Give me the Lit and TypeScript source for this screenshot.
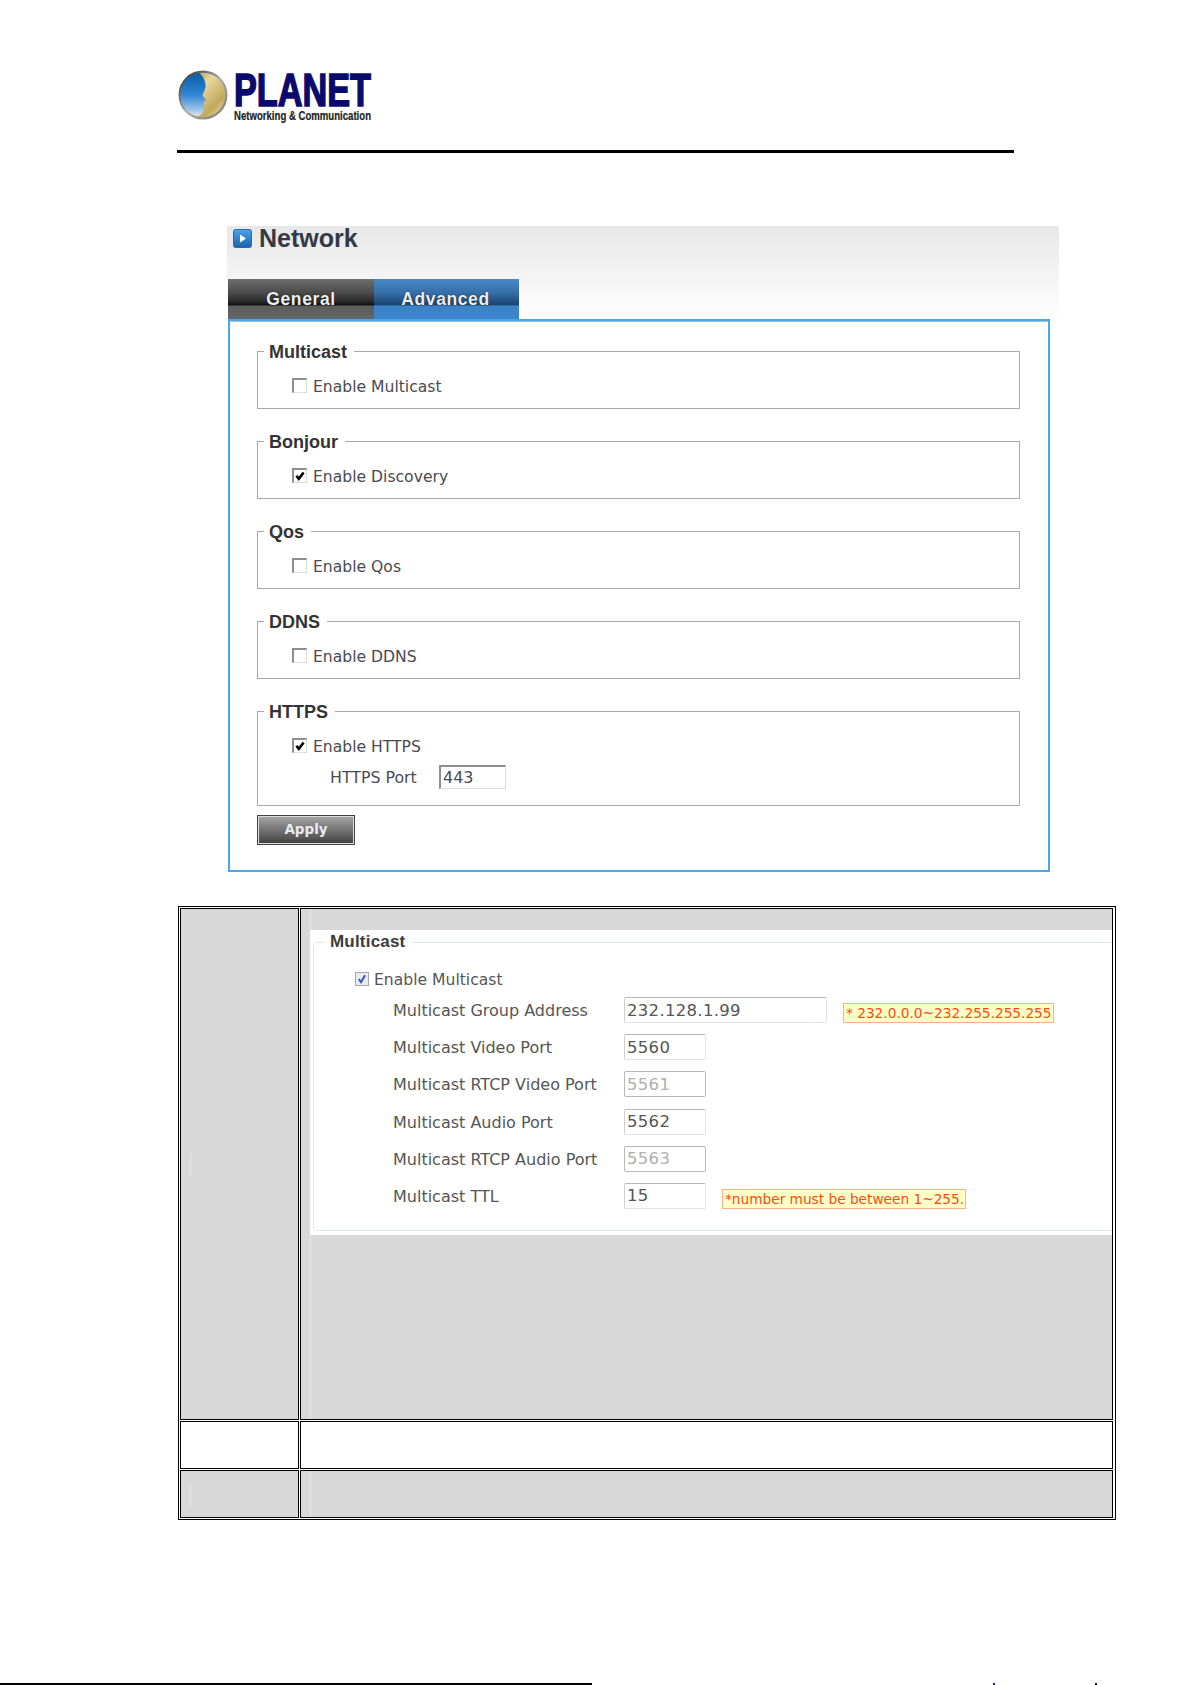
import { LitElement, html, css } from "lit";
import { customElement } from "lit/decorators.js";

const check = html`<svg class="tick" viewBox="0 0 13 13"><path d="M2.6 6.2 L5.2 9.6 L10.4 2.6" fill="none" stroke="#000" stroke-width="2.8"/></svg>`;
const blueCheck = html`<svg class="tick" viewBox="0 0 13 13"><path d="M3 6.5 L5.4 10 L9.8 2.5" fill="none" stroke="#3f55b5" stroke-width="2.2"/></svg>`;

@customElement("app-root")
export class AppRoot extends LitElement {
  static styles = css`
    :host { display: block; width: 1191px; height: 1685px; overflow: hidden; background: #fff; font-family: "DejaVu Sans", sans-serif; color: #444; }
    * { box-sizing: border-box; }
    .page { display: flex; flex-direction: column; height: 1685px; }
    .logo { display: block; margin: 59px 0 0 177px; width: 270px; height: 70px; flex: none; }
    .rule { flex: none; height: 3px; width: 837px; margin: 21px 0 0 177px; background: #000; }
    .head { flex: none; width: 832px; height: 93px; margin: 73px 0 0 227px; background: linear-gradient(#e7e7e7, #fff); display: flex; flex-direction: column; justify-content: space-between; }
    .title { display: flex; align-items: center; gap: 7px; padding: 1px 0 0 6px; height: 24px; }
    .title svg { width: 19px; height: 19px; flex: none; }
    .title span { font: bold 25px/25px "Liberation Sans", sans-serif; color: #333a44; }
    .tabs { display: flex; margin-left: 1px; }
    .tab { width: 146px; height: 40px; display: flex; align-items: center; justify-content: center; padding-top: 1px; color: #eef0f2; font: bold 17.5px "Liberation Sans", sans-serif; letter-spacing: 0.6px; text-shadow: 0 0 1px #000; }
    .tab.gen { background: linear-gradient(#6e6e6e 0%, #4a4a4a 35%, #262626 58%, #111 64%, #5c5c5c 68%, #666 100%); }
    .tab.adv { width: 145px; padding-right: 2px; background: linear-gradient(#4a89c9 0%, #356ea8 35%, #1f4d7d 58%, #1b466f 64%, #3b82c8 68%, #3c84cb 100%); }
    .panel { flex: none; width: 822px; height: 553px; margin-left: 228px; border: 2px solid #45a9ef; box-shadow: inset 0 1px #bbb; padding: 19px 28px 0 27px; display: flex; flex-direction: column; background: #fff; }
    fieldset { margin: 0; padding: 0; border: 1px solid #a9a9a9; min-width: 0; }
    .panel fieldset { height: 69px; margin-bottom: 21px; }
    .panel fieldset.tall { height: 106px; margin-bottom: 0; }
    legend { margin-left: 6px; padding: 2px 7px 0 5px; font: bold 18px/20px "Liberation Sans", sans-serif; color: #333; }
    .row { display: flex; align-items: center; height: 20px; margin: 15px 0 0 35px; font-size: 15.6px; line-height: 20px; color: #4a4a50; }
    .box { width: 15px; height: 15px; margin: -3px 6px 0 -1px; flex: none; border: 1px solid #ddd; border-top: 2px solid #8e8e8e; border-left: 2px solid #8e8e8e; background: #fff; display: flex; align-items: center; justify-content: center; }
    .tick { width: 12px; height: 12px; display: block; }
    .port { display: flex; align-items: center; height: 24px; margin: 8px 0 0 72px; font-size: 15.8px; color: #4a4a50; }
    .port label { width: 109px; }
    .port input { width: 67px; height: 24px; border: 1px solid #ddd; border-top: 2px solid #8e8e8e; border-left: 2px solid #8e8e8e; font: 16px "DejaVu Sans", sans-serif; color: #4a4a50; padding: 0 0 0 2px; outline: none; }
    .apply { flex: none; width: 98px; height: 30px; margin-top: 9px; padding: 0 0 2px; border: 1px solid #444; outline: none; box-shadow: inset 0 0 0 1px #ddd; background: linear-gradient(#a6a6a6, #3f3f3f); color: #e8eaf0; font: bold 13.5px "DejaVu Sans", sans-serif; }
    .table { flex: none; width: 938px; height: 614px; margin: 34px 0 0 178px; border: 1px solid #000; padding: 1px; display: grid; grid-template-columns: 119px 813px; grid-template-rows: 512px 48px 48px; gap: 1px; background: #fff; }
    .cell { border: 1px solid #000; background: #d8d8d8; overflow: hidden; display: flex; }
    .cell.white { background: #fff; }
    .first { align-items: center; padding-left: 9px; }
    .mark { width: 1px; height: 23px; background: #e6e6e6; }
    .second { padding-left: 9px; }
    .lane { flex: 1; min-width: 0; border-left: 1px solid #e6e6e6; display: flex; flex-direction: column; }
    .shot { margin: 21px 0 0 -1px; height: 305px; background: #fff; padding: 2px 0 0 3px; }
    .shot fieldset { width: 830px; height: 299px; border: 1px solid #e0e7ec; border-radius: 5px; }
    .shot legend { margin-left: 11px; padding: 0 7px 0 5px; font-size: 17px; letter-spacing: .2px; color: #3c3c3c; }
    .shot .row { margin: 18px 0 0 41px; color: #555; }
    .shot .box { border: 1px solid #a8a8a8; background: #e8ecf4; width: 14px; height: 14px; margin: -3px 5px 0 0; }
    .form { display: flex; flex-direction: column; gap: 11.2px; margin: 7px 0 0 79px; }
    .f { display: flex; height: 26px; font-size: 16px; color: #555; }
    .f label { width: 231px; line-height: 28px; flex: none; }
    .f input { width: 82px; height: 26px; border: 1px solid #dfe4e8; border-top-color: #b8b8b8; border-left-color: #d0d0d0; border-radius: 2px; font: 16.5px "DejaVu Sans", sans-serif; color: #555; background: #fff; padding: 0 0 0 2px; letter-spacing: .3px; outline: none; }
    .f input.wide { width: 203px; }
    .f input:disabled { border: 1px solid #b8b8b8; color: #b0b0b0; }
    .hint { align-self: flex-end; margin-left: 16px; height: 20px; padding: 0 1px 0 2px; border: 1px solid #ffb080; background: #ffffc8; color: #ff4a14; font-size: 13.7px; line-height: 19px; white-space: nowrap; }
    .foot { flex: none; margin-top: auto; height: 2px; position: relative; }
    .foot .line { width: 592px; height: 2px; background: #000; }
    .foot i { position: absolute; top: 0; width: 2px; height: 2px; }
  `;

  private fs(name: string, label: string, on: boolean) {
    return html`<fieldset><legend>${name}</legend>
      <div class="row"><span class="box">${on ? check : ""}</span>${label}</div></fieldset>`;
  }

  render() {
    return html`<div class="page">
      <svg class="logo" viewBox="0 -10 270 70">
        <defs>
          <linearGradient id="gold" x1="0" y1="0" x2="1" y2="1"><stop offset="0" stop-color="#8b7a44"/><stop offset=".4" stop-color="#e8d79a"/><stop offset=".75" stop-color="#c2a85c"/><stop offset="1" stop-color="#efe4bb"/></linearGradient>
          <linearGradient id="blue" x1="0" y1="0" x2="0" y2="1"><stop offset="0" stop-color="#0d5aa8"/><stop offset=".5" stop-color="#2e86d4"/><stop offset=".85" stop-color="#9cc3ea"/><stop offset="1" stop-color="#dfe6ea"/></linearGradient>
          <linearGradient id="rim" x1="0" y1="0" x2="1" y2="1"><stop offset="0" stop-color="#222"/><stop offset=".5" stop-color="#aaa"/><stop offset="1" stop-color="#777"/></linearGradient>
        </defs>
        <circle cx="26" cy="26" r="24.5" fill="url(#rim)"/>
        <circle cx="26" cy="26" r="22.3" fill="url(#gold)"/>
        <path d="M22.5 4 C11.5 5 3.7 14.5 3.7 26 C3.7 38 13 47 21.5 47 C26.5 44.5 27 41.5 26.5 39 C27.5 38 27.3 37 26.5 36 C27.5 35 27 34 26 33.5 C27.5 32.5 29.5 32 28.5 30.5 L25.5 26.5 C26.5 22.5 29 20.5 28.5 15.5 C28 11 26 7 22.5 4 Z" fill="url(#blue)"/>
        <text x="57" y="37" textLength="137" lengthAdjust="spacingAndGlyphs" font-family="Liberation Sans" font-weight="700" font-size="47" fill="#0a0a6e" stroke="#0a0a6e" stroke-width="1.6">PLANET</text>
        <text x="57" y="51" textLength="137" lengthAdjust="spacingAndGlyphs" font-family="Liberation Sans" font-weight="700" font-size="12.5" fill="#222" stroke="#222" stroke-width=".2">Networking &amp; Communication</text>
      </svg>
      <div class="rule"></div>
      <div class="head">
        <div class="title">
          <svg viewBox="0 0 19 19"><defs><linearGradient id="ib" x1="0" y1="0" x2="0" y2="1"><stop offset="0" stop-color="#4aa3e8"/><stop offset="1" stop-color="#1b62ad"/></linearGradient></defs><rect x=".5" y=".5" width="18" height="18" rx="2" fill="url(#ib)" stroke="#2a6ea8"/><path d="M7 5.5 L13 9.5 L7 13.5 Z" fill="#fff"/></svg>
          <span>Network</span>
        </div>
        <div class="tabs"><div class="tab gen">General</div><div class="tab adv">Advanced</div></div>
      </div>
      <div class="panel">
        ${this.fs("Multicast", "Enable Multicast", false)}
        ${this.fs("Bonjour", "Enable Discovery", true)}
        ${this.fs("Qos", "Enable Qos", false)}
        ${this.fs("DDNS", "Enable DDNS", false)}
        <fieldset class="tall"><legend>HTTPS</legend>
          <div class="row"><span class="box">${check}</span>Enable HTTPS</div>
          <div class="port"><label>HTTPS Port</label><input value="443" /></div>
        </fieldset>
        <button class="apply">Apply</button>
      </div>
      <div class="table">
        <div class="cell first"><span class="mark"></span></div>
        <div class="cell second"><div class="lane">
          <div class="shot"><fieldset><legend>Multicast</legend>
            <div class="row"><span class="box">${blueCheck}</span>Enable Multicast</div>
            <div class="form">
              <div class="f"><label>Multicast Group Address</label><input class="wide" value="232.128.1.99" /><span class="hint">* 232.0.0.0~232.255.255.255</span></div>
              <div class="f"><label>Multicast Video Port</label><input value="5560" /></div>
              <div class="f"><label>Multicast RTCP Video Port</label><input value="5561" disabled /></div>
              <div class="f"><label>Multicast Audio Port</label><input value="5562" /></div>
              <div class="f"><label>Multicast RTCP Audio Port</label><input value="5563" disabled /></div>
              <div class="f"><label>Multicast TTL</label><input value="15" /><span class="hint">*number must be between 1~255.</span></div>
            </div>
          </fieldset></div>
        </div></div>
        <div class="cell white"></div>
        <div class="cell white"></div>
        <div class="cell first"><span class="mark"></span></div>
        <div class="cell second"><div class="lane"></div></div>
      </div>
      <div class="foot"><div class="line"></div>
        <i style="left:993px;background:#22c"></i><i style="left:1095px;background:#111"></i>
      </div>
    </div>`;
  }
}
